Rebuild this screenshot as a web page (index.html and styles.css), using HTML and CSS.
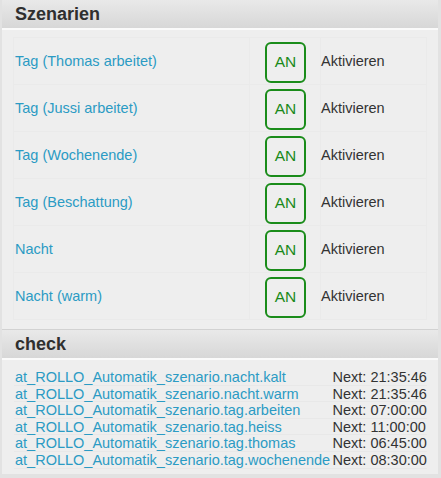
FILE: index.html
```html
<!DOCTYPE html>
<html>
<head>
<meta charset="utf-8">
<link rel="stylesheet" href="styles.css">
</head>
<body>
<div class="panel">
  <div class="block">
    <div class="head">Szenarien</div>
    <div class="content">
      <table class="scen">
        <tr><td class="name"><a>Tag (Thomas arbeitet)</a></td><td class="btn"><span class="an">AN</span></td><td class="act">Aktivieren</td></tr>
        <tr><td class="name"><a>Tag (Jussi arbeitet)</a></td><td class="btn"><span class="an">AN</span></td><td class="act">Aktivieren</td></tr>
        <tr><td class="name"><a>Tag (Wochenende)</a></td><td class="btn"><span class="an">AN</span></td><td class="act">Aktivieren</td></tr>
        <tr><td class="name"><a>Tag (Beschattung)</a></td><td class="btn"><span class="an">AN</span></td><td class="act">Aktivieren</td></tr>
        <tr><td class="name"><a>Nacht</a></td><td class="btn"><span class="an">AN</span></td><td class="act">Aktivieren</td></tr>
        <tr><td class="name"><a>Nacht (warm)</a></td><td class="btn"><span class="an">AN</span></td><td class="act">Aktivieren</td></tr>
      </table>
    </div>
  </div>
  <div class="block second">
    <div class="head">check</div>
    <div class="content c2">
      <table class="chk">
        <tr><td><a>at_ROLLO_Automatik_szenario.nacht.kalt</a></td><td class="nx">Next: 21:35:46</td></tr>
        <tr><td><a>at_ROLLO_Automatik_szenario.nacht.warm</a></td><td class="nx">Next: 21:35:46</td></tr>
        <tr><td><a>at_ROLLO_Automatik_szenario.tag.arbeiten</a></td><td class="nx">Next: 07:00:00</td></tr>
        <tr><td><a>at_ROLLO_Automatik_szenario.tag.heiss</a></td><td class="nx">Next: 11:00:00</td></tr>
        <tr><td><a>at_ROLLO_Automatik_szenario.tag.thomas</a></td><td class="nx">Next: 06:45:00</td></tr>
        <tr><td><a>at_ROLLO_Automatik_szenario.tag.wochenende</a></td><td class="nx">Next: 08:30:00</td></tr>
      </table>
    </div>
  </div>
</div>
</body>
</html>
```
FILE: styles.css
```css
html, body {
  margin: 0;
  padding: 0;
  background: #e2e2e2;
  font-family: "Liberation Sans", Arial, sans-serif;
  color: #333;
}
.panel {
  width: 436px;
  margin-left: 2px;
  background: #eeeeee;
  min-height: 474px;
}
.head {
  height: 30px;
  box-sizing: border-box;
  padding: 4px 0 0 13px;
  font-size: 18px;
  font-weight: bold;
  color: #2f2f2f;
  background: linear-gradient(#e9e9e9, #d7d7d7);
  border-bottom: 2px solid #fafafa;
}
.content {
  padding: 7px 11px 9px 11px;
  border-bottom: 1px solid #d2d2d2;
}
table {
  border-collapse: separate;
  border-spacing: 0;
  width: 100%;
}
.scen td {
  height: 46px;
  border-top: 1px solid #eaeaea;
  border-left: 1px solid #eaeaea;
  padding: 0;
  font-size: 14.5px;
  vertical-align: middle;
}
.scen td.act {
  border-right: 1px solid #eaeaea;
}
.scen tr:last-child td {
  border-bottom: 1px solid #eaeaea;
}
.scen td.name {
  width: 234px;
  padding-left: 1px;
}
a {
  color: #2b9bc4;
  text-decoration: none;
}
.scen td.btn {
  width: 70px;
  text-align: left;
}
.an {
  display: flex;
  align-items: center;
  justify-content: center;
  width: 37px;
  height: 37px;
  margin-left: 15px;
  margin-top: 2px;
  border: 2px solid #1a8c1a;
  border-radius: 6px;
  color: #1a8a1a;
  font-size: 15.5px;
}
.scen td.act {
  color: #333;
  padding-left: 0;
}
.c2 {
  padding: 9px 11px 5px 12px;
  border-bottom: none;
}
.chk td {
  font-size: 14.5px;
  height: 16.6px;
  line-height: 16.6px;
  padding: 0 0 0 1px;
  box-shadow: inset 0 -1px 0 #e8e8e8;
  white-space: nowrap;
}
.chk td.nx {
  color: #333;
  padding-left: 2px;
}
```
